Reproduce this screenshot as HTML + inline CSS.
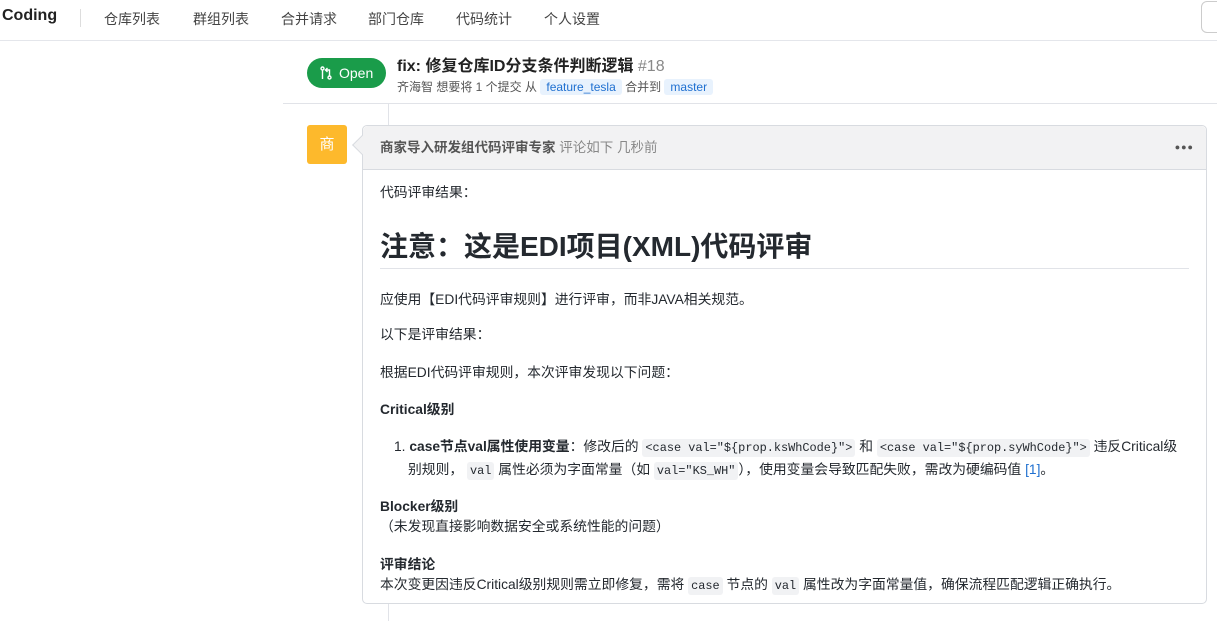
<!DOCTYPE html>
<html><head><meta charset="utf-8"><style>
*{box-sizing:border-box;margin:0;padding:0}
body{width:1217px;height:621px;overflow:hidden;background:#fff;font-family:"Liberation Sans","Noto Sans CJK SC",sans-serif;color:#24292f;position:relative}
.nav{position:absolute;left:0;top:0;width:1217px;height:41px;border-bottom:1px solid #e4e6eb}
.logo{position:absolute;left:2px;top:7px;font-size:16px;font-weight:bold;color:#222}
.sep{position:absolute;left:80px;top:9px;width:1px;height:18px;background:#ddd}
.nav a{position:absolute;top:9px;font-size:14px;color:#444;text-decoration:none}
.btn{position:absolute;left:1201px;top:1px;width:30px;height:32px;border:1px solid #ccc;border-radius:6px}
.open{position:absolute;left:307px;top:58px;width:79px;height:30px;border-radius:15px;background:#1a9c4a;color:#fff;font-size:14px;line-height:30px;padding-left:32px}
.title{position:absolute;left:397px;top:52px;font-size:16px;font-weight:bold;color:#222}
.title span{font-weight:normal;color:#888}
.sub{position:absolute;left:397px;top:78px;font-size:12px;color:#555}
.tag{background:#e8f2fd;color:#1e6fd0;padding:1px 6px;border-radius:3px}
.hl{position:absolute;left:283px;top:103px;width:934px;height:1px;background:#e1e3e8}
.vl{position:absolute;left:388px;top:104px;width:1px;height:517px;background:#e1e3e8}
.av{position:absolute;left:307px;top:125px;width:40px;height:39px;background:#fdb92c;border-radius:3px;color:#fff;text-align:center;line-height:39px;font-size:15px}
.box{position:absolute;left:362px;top:125px;width:845px;height:479px;border:1px solid #d8dbe0;border-radius:5px;background:#fff}
.hd{height:44px;background:#f2f2f3;border-bottom:1px solid #d8dbe0;border-radius:5px 5px 0 0;font-size:13.5px;line-height:44px;padding-left:17px;color:#555;font-weight:bold}
.hd span{font-weight:normal;color:#888}
.dots{position:absolute;right:12px;top:0;line-height:42px;font-size:9px;color:#555;letter-spacing:1px;font-weight:normal}
.arrow{position:absolute;left:355px;top:138px;width:14px;height:14px;background:#f2f2f3;border-left:1px solid #d8dbe0;border-bottom:1px solid #d8dbe0;transform:rotate(45deg)}
.c{position:absolute;left:380px;font-size:13.8px;color:#24292f;white-space:nowrap}
code{font-family:"Liberation Mono",monospace;font-size:11.9px;background:#f1f2f4;padding:2px 3px;border-radius:3px}
b{font-weight:bold}
</style></head><body>
<div class="nav"><div class="logo">Coding</div><div class="sep"></div>
<a style="left:104px">仓库列表</a><a style="left:193px">群组列表</a><a style="left:281px">合并请求</a><a style="left:368px">部门仓库</a><a style="left:456px">代码统计</a><a style="left:544px">个人设置</a>
<div class="btn"></div></div>
<div class="open"><svg style="position:absolute;left:13px;top:8px" width="12" height="14" viewBox="0 0 12 14" fill="none" stroke="#fff" stroke-width="1.4"><circle cx="2.5" cy="2.5" r="1.5"/><circle cx="9.5" cy="11.5" r="1.5"/><path d="M2.5 4v9M9.5 10V4H6M7.5 2L5.5 4l2 2"/></svg>Open</div>
<div class="title">fix: 修复仓库ID分支条件判断逻辑 <span>#18</span></div>
<div class="sub">齐海智 想要将 1 个提交 从 <span class="tag">feature_tesla</span> 合并到 <span class="tag">master</span></div>
<div class="hl"></div><div class="vl"></div>
<div class="av">商</div>
<div class="box"><div class="hd">商家导入研发组代码评审专家 <span>评论如下 几秒前</span><div class="dots">●●●</div></div></div>
<div class="arrow"></div>
<div class="c" style="top:181px">代码评审结果：</div>
<div class="c" style="top:225px;font-size:28px;font-weight:bold">注意：这是EDI项目(XML)代码评审</div>
<div style="position:absolute;left:380px;top:268px;width:809px;height:1px;background:#e1e3e8"></div>
<div class="c" style="top:288px">应使用【EDI代码评审规则】进行评审，而非JAVA相关规范。</div>
<div class="c" style="top:323px">以下是评审结果：</div>
<div class="c" style="top:361px">根据EDI代码评审规则，本次评审发现以下问题：</div>
<div class="c" style="top:398px"><b>Critical级别</b></div>
<div class="c" style="top:435px;left:394px">1. <b>case节点val属性使用变量</b>：修改后的 <code>&lt;case val="${prop.ksWhCode}"&gt;</code> 和 <code>&lt;case val="${prop.syWhCode}"&gt;</code> 违反Critical级</div>
<div class="c" style="top:458px;left:408px">别规则， <code>val</code> 属性必须为字面常量（如 <code>val="KS_WH"</code>），使用变量会导致匹配失败，需改为硬编码值 <span style="color:#1e6fd0">[1]</span>。</div>
<div class="c" style="top:495px"><b>Blocker级别</b></div>
<div class="c" style="top:515px">（未发现直接影响数据安全或系统性能的问题）</div>
<div class="c" style="top:553px"><b>评审结论</b></div>
<div class="c" style="top:573px">本次变更因违反Critical级别规则需立即修复，需将 <code>case</code> 节点的 <code>val</code> 属性改为字面常量值，确保流程匹配逻辑正确执行。</div>
</body></html>
